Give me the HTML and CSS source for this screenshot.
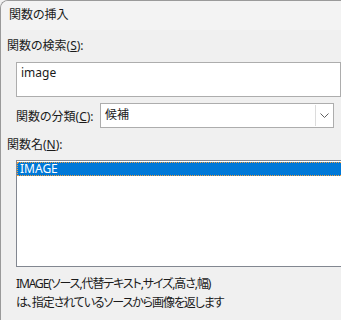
FILE: index.html
```html
<!DOCTYPE html>
<html lang="ja">
<head>
  <meta charset="UTF-8">
  <title>関数の挿入</title>
  <link rel="stylesheet" href="styles.css">
</head>
<body>
  <div class="window">
    <div class="titlebar">関数の挿入</div>
    <div class="content">
      <div class="label">関数の検索(<u>S</u>):</div>
      <div class="search">image</div>
      <div class="cat-row">
        <span class="cat-label">関数の分類(<u>C</u>):</span>
        <div class="select">
          <span class="select-value">候補</span>
          <span class="select-btn">
            <svg width="9" height="5" viewBox="0 0 9 5"><path d="M0.5 0.5 L4.5 4.5 L8.5 0.5" fill="none" stroke="#606060" stroke-width="1"/></svg>
          </span>
        </div>
      </div>
      <div class="label label-list">関数名(<u>N</u>):</div>
      <div class="list">
        <div class="item selected">IMAGE</div>
      </div>
      <p class="desc">IMAGE(ソース,代替テキスト,サイズ,高さ,幅)<br>は、指定されているソースから画像を返します</p>
    </div>
  </div>
</body>
</html>
```

FILE: styles.css
```css
body {
  margin: 0;
  background: #f0f0f0;
  font-family: "Noto Sans", "Noto Sans CJK JP", sans-serif;
  font-size: 12px;
  color: #1a1a1a;
  overflow: hidden;
  height: 320px;
}
.window {
  border-left: 1px solid #9a9a9a;
  border-top: 1px solid #9a9a9a;
  border-top-left-radius: 8px;
  height: 320px;
  background: #f0f0f0;
  overflow: hidden;
  font-feature-settings: "palt";
}
.titlebar {
  height: 29px;
  line-height: 28px;
  padding-left: 8px;
  background: #f3f3f3;
}
.content {
  padding: 8px 0 0 6px;
}
.label {
  line-height: 16px;
}
.search {
  margin: 8px 0 0 9px;
  width: 315px;
  height: 33px;
  border: 1px solid #adadad;
  background: #fff;
  padding: 0 4px;
  line-height: 20px;
  box-sizing: content-box;
}
.cat-row {
  display: flex;
  align-items: center;
  margin: 6px 0 0 9px;
  height: 25px;
}
.cat-label {
  width: 84px;
}
.select {
  display: flex;
  align-items: stretch;
  width: 234px;
  height: 25px;
  box-sizing: border-box;
  border: 1px solid #adadad;
  background: #fff;
}
.select-value {
  flex: 1;
  line-height: 22px;
  padding-left: 4px;
}
.select-btn {
  width: 16px;
  display: flex;
  align-items: center;
  justify-content: center;
  border-left: 1px solid #dcdcdc;
  margin: 1px;
}
.label-list {
  margin-top: 9px;
}
.list {
  margin: 7px 0 0 9px;
  width: 340px;
  height: 107px;
  box-sizing: border-box;
  border: 1px solid #828790;
  background: #fff;
  padding: 1px 0 0 0;
}
.item {
  height: 14px;
  line-height: 14px;
  padding-left: 3px;
}
.selected {
  background: #0078d7;
  color: #fff;
  outline: 1px dotted #f0a040;
  outline-offset: -1px;
}
.desc {
  margin: 7px 0 0 9px;
  line-height: 19px;
  letter-spacing: -1.1px;
}
```
